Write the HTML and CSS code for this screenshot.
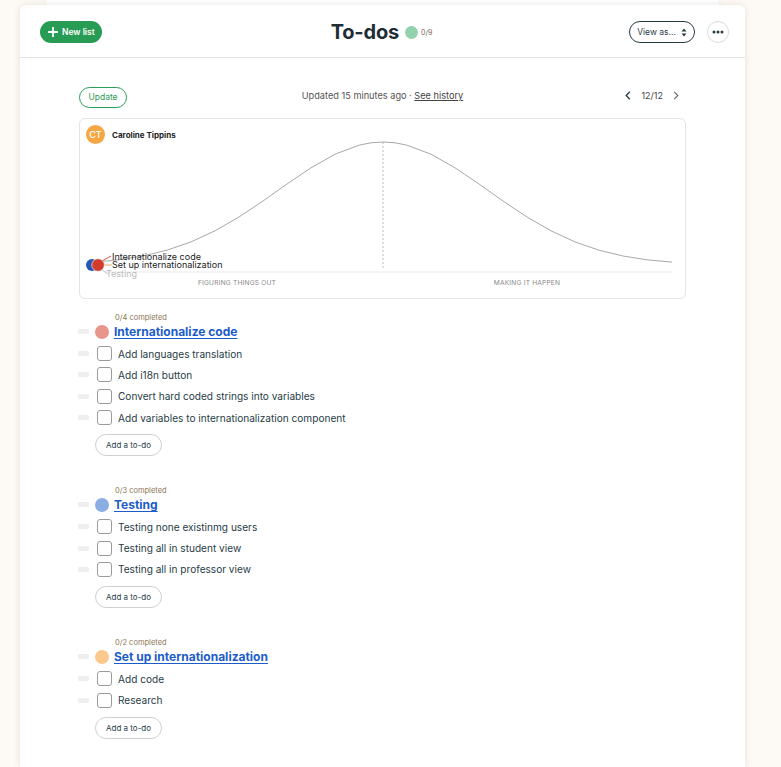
FILE: index.html
```html
<!DOCTYPE html>
<html lang="en">
<head>
<meta charset="utf-8">
<title>To-dos</title>
<link rel="stylesheet" href="styles.css">
</head>
<body>
<div class="back-card"></div>
<main class="card">
  <header class="top">
    <div class="top-left">
      <button class="btn-new"><svg class="plus" width="10" height="10" viewBox="0 0 10 10"><path d="M5 0.5V9.5M0.5 5H9.5" stroke="#fff" stroke-width="1.8" stroke-linecap="round"/></svg>New list</button>
    </div>
    <div class="top-center">
      <h1 class="title">To-dos</h1>
      <span class="prog-dot"></span>
      <span class="prog-txt">0/9</span>
    </div>
    <div class="top-right">
      <button class="btn-view">View as...<svg class="updown" width="6" height="9" viewBox="0 0 6 9"><path d="M3 0.5L5.5 3.5H0.5Z M3 8.5L5.5 5.5H0.5Z" fill="#283c46"/></svg></button>
      <button class="btn-more"><svg width="12" height="4" viewBox="0 0 12 4"><circle cx="2" cy="2" r="1.5" fill="#283c46"/><circle cx="6" cy="2" r="1.5" fill="#283c46"/><circle cx="10" cy="2" r="1.5" fill="#283c46"/></svg></button>
    </div>
  </header>

  <section class="content">
    <div class="update-row">
      <div><button class="btn-update">Update</button></div>
      <div class="updated">Updated 15 minutes ago · <a href="#" class="hist">See history</a></div>
      <div class="pager">
        <svg width="6" height="9" viewBox="0 0 6 9"><path d="M4.8 0.8L1.2 4.5L4.8 8.2" fill="none" stroke="#283c46" stroke-width="1.3"/></svg>
        <span class="pager-num">12/12</span>
        <svg width="6" height="9" viewBox="0 0 6 9"><path d="M1.2 0.8L4.8 4.5L1.2 8.2" fill="none" stroke="#666" stroke-width="1.1"/></svg>
      </div>
    </div>

    <div class="chart">
      <div class="person">
        <span class="avatar">CT</span>
        <span class="person-name">Caroline Tippins</span>
      </div>
      <svg class="hill" width="607" height="181" viewBox="0 0 607 181">
        <line x1="24" y1="154" x2="593" y2="154" stroke="#e8e8e8" stroke-width="1"/>
        <line x1="304" y1="24" x2="304" y2="152" stroke="#aaa" stroke-width="0.8" stroke-dasharray="2 2"/>
        <polyline fill="none" stroke="#a8a8a8" stroke-width="1" points="16,144.1 40,141.8 64,138 88,132.2 112,123.9 136,112.8 160,99 184,83 208,66 232,49.8 256,36.2 280,27.2 292,24.8 304,24 316,24.8 328,27.2 352,36.2 376,49.8 400,66 424,83 448,99 472,112.8 496,123.9 520,132.2 544,138 568,141.8 593,144.1"/>
        <line x1="22" y1="151" x2="29" y2="156" stroke="#b9cbe6" stroke-width="1"/>
        <line x1="24" y1="147" x2="33" y2="147" stroke="#e8a868" stroke-width="1"/>
        <line x1="23" y1="143" x2="32" y2="138" stroke="#d8574a" stroke-width="1"/>
        <circle cx="13" cy="147" r="6" fill="#2556b4"/>
        <circle cx="19" cy="147" r="6.3" fill="#d23c2c" stroke="#fff" stroke-width="0.6"/>
        <text class="lbl" x="33" y="141.5">Internationalize code</text>
        <text class="lbl" x="33" y="149.5">Set up internationalization</text>
        <text class="lbl lbl-muted" x="27" y="158.5">Testing</text>
        <text class="axis" x="158" y="166.5" text-anchor="middle">FIGURING THINGS OUT</text>
        <text class="axis" x="448" y="166.5" text-anchor="middle">MAKING IT HAPPEN</text>
      </svg>
    </div>

    <div class="lists">
      <div class="list">
        <div class="list-meta">0/4 completed</div>
        <div class="row list-head"><span class="handle"></span><span class="dot dot-red"></span><a href="#" class="list-title">Internationalize code</a></div>
        <div class="row item"><span class="handle"></span><span class="check"></span><span class="item-txt">Add languages translation</span></div>
        <div class="row item"><span class="handle"></span><span class="check"></span><span class="item-txt">Add i18n button</span></div>
        <div class="row item"><span class="handle"></span><span class="check"></span><span class="item-txt">Convert hard coded strings into variables</span></div>
        <div class="row item"><span class="handle"></span><span class="check"></span><span class="item-txt">Add variables to internationalization component</span></div>
        <button class="btn-add">Add a to-do</button>
      </div>

      <div class="list">
        <div class="list-meta">0/3 completed</div>
        <div class="row list-head"><span class="handle"></span><span class="dot dot-blue"></span><a href="#" class="list-title">Testing</a></div>
        <div class="row item"><span class="handle"></span><span class="check"></span><span class="item-txt">Testing none existinmg users</span></div>
        <div class="row item"><span class="handle"></span><span class="check"></span><span class="item-txt">Testing all in student view</span></div>
        <div class="row item"><span class="handle"></span><span class="check"></span><span class="item-txt">Testing all in professor view</span></div>
        <button class="btn-add">Add a to-do</button>
      </div>

      <div class="list">
        <div class="list-meta">0/2 completed</div>
        <div class="row list-head"><span class="handle"></span><span class="dot dot-orange"></span><a href="#" class="list-title">Set up internationalization</a></div>
        <div class="row item"><span class="handle"></span><span class="check"></span><span class="item-txt">Add code</span></div>
        <div class="row item"><span class="handle"></span><span class="check"></span><span class="item-txt">Research</span></div>
        <button class="btn-add">Add a to-do</button>
      </div>
    </div>
  </section>
</main>
</body>
</html>
```

FILE: styles.css
```css
* { box-sizing: border-box; }

html, body {
  margin: 0;
  padding: 0;
  height: 100%;
}

body {
  background: #fdf9f4;
  font-family: "Inter", "Liberation Sans", sans-serif;
  color: #283c46;
  overflow: hidden;
}

button {
  font-family: inherit;
  cursor: pointer;
  background: none;
  padding: 0;
}

.back-card {
  margin-left: 46px;
  width: 673px;
  height: 5px;
  background: #fff;
  box-shadow: 0 0 4px rgba(0, 0, 0, 0.06);
}

.card {
  position: relative;
  margin-left: 20px;
  width: 725px;
  min-height: 762px;
  background: #fff;
  border-radius: 6px 6px 0 0;
  box-shadow: 0 0 6px rgba(60, 40, 20, 0.12);
}

/* header */
.top {
  display: grid;
  grid-template-columns: 1fr auto 1fr;
  align-items: center;
  height: 53px;
  padding: 2px 16px 0 16px;
  border-bottom: 1px solid #e6e3de;
}

.top-left { display: flex; }

.btn-new {
  display: flex;
  align-items: center;
  gap: 4px;
  margin-left: 4px;
  height: 22px;
  width: 62px;
  padding: 0 0 0 8px;
  border: 0;
  border-radius: 11px;
  background: #289b55;
  color: #fff;
  font-size: 8.5px;
  font-weight: 600;
}

.top-center {
  display: flex;
  align-items: center;
  transform: translateX(-1px);
}

.title {
  margin: 0;
  font-size: 20px;
  font-weight: 700;
  color: #1f2d36;
  letter-spacing: -0.2px;
}

.prog-dot {
  width: 13px;
  height: 13px;
  border-radius: 50%;
  background: #92d1ad;
  margin-left: 6px;
}

.prog-txt {
  font-size: 7px;
  color: #7a6a55;
  margin-left: 3px;
}

.top-right {
  display: flex;
  justify-content: flex-end;
  align-items: center;
  gap: 12px;
}

.btn-view {
  display: flex;
  align-items: center;
  justify-content: center;
  gap: 5px;
  width: 66px;
  height: 22px;
  border: 1px solid #283c46;
  border-radius: 11px;
  font-size: 8.5px;
  color: #283c46;
}

.btn-more {
  display: flex;
  align-items: center;
  justify-content: center;
  width: 22px;
  height: 22px;
  border: 1px solid #dcdcdc;
  border-radius: 50%;
}

/* content */
.content {
  padding: 26px 59px 0;
}

.update-row {
  display: grid;
  grid-template-columns: 1fr auto 1fr;
  align-items: center;
  height: 21px;
}

.btn-update {
  width: 48px;
  height: 21px;
  border: 1px solid #2a9d56;
  border-radius: 11px;
  color: #2a9d56;
  font-size: 8.5px;
}

.updated {
  font-size: 9.2px;
  color: #555;
}

.hist {
  color: #444;
  text-decoration: underline;
}

.pager {
  display: flex;
  justify-content: flex-end;
  align-items: center;
  gap: 10px;
  padding-right: 7px;
}

.pager-num {
  font-size: 9px;
  color: #444;
}

/* chart */
.chart {
  position: relative;
  margin-top: 13px;
  height: 181px;
  border: 1px solid #e4e4e4;
  border-radius: 6px;
  padding: 6px 6px;
}

.person {
  position: relative;
  z-index: 1;
  display: flex;
  align-items: center;
  gap: 7px;
}

.avatar {
  width: 19px;
  height: 19px;
  border-radius: 50%;
  background: #f6a642;
  color: #fff;
  font-size: 9px;
  font-weight: 500;
  display: flex;
  align-items: center;
  justify-content: center;
}

.person-name {
  font-size: 8px;
  font-weight: 700;
  color: #222;
}

.hill {
  position: absolute;
  left: -1px;
  top: -1px;
}

.lbl {
  font-family: "Inter", "Liberation Sans", sans-serif;
  font-size: 9px;
  fill: #222;
}

.lbl-muted { fill: #bbb; }

.axis {
  font-family: "Inter", "Liberation Sans", sans-serif;
  font-size: 6.6px;
  fill: #888;
  letter-spacing: 0.2px;
}

/* lists */
.lists {
  padding-top: 14px;
}

.list + .list {
  margin-top: 30px;
}

.list-meta {
  height: 10px;
  line-height: 10px;
  font-size: 7.5px;
  color: #8a7555;
  margin-left: 36px;
}

.row {
  display: grid;
  grid-template-columns: 11px 17px 1fr;
  column-gap: 6px;
  align-items: center;
  margin-left: -1px;
}

.list-head {
  height: 17px;
  margin-bottom: 3px;
}

.item {
  height: 21.3px;
}

.handle {
  width: 11px;
  height: 5px;
  background: #efefef;
  border-radius: 1px;
}

.dot {
  width: 14px;
  height: 14px;
  border-radius: 50%;
  justify-self: start;
}

.dot-red { background: #e8958b; }
.dot-blue { background: #8aaee1; }
.dot-orange { background: #fcc98d; }

.list-title {
  margin-left: -4px;
  font-size: 12px;
  font-weight: 700;
  color: #1b5ccb;
  text-decoration: underline;
  text-underline-offset: 1.5px;
}

.check {
  justify-self: end;
  width: 15px;
  height: 15px;
  border: 1px solid #9a9a9a;
  border-radius: 3px;
  background: #fff;
}

.item-txt {
  font-size: 10.1px;
  color: #283c46;
}

.btn-add {
  display: block;
  margin: 6px 0 0 16px;
  width: 67px;
  height: 22px;
  border: 1px solid #d0d0d0;
  border-radius: 11px;
  font-size: 8px;
  color: #283c46;
}
```
